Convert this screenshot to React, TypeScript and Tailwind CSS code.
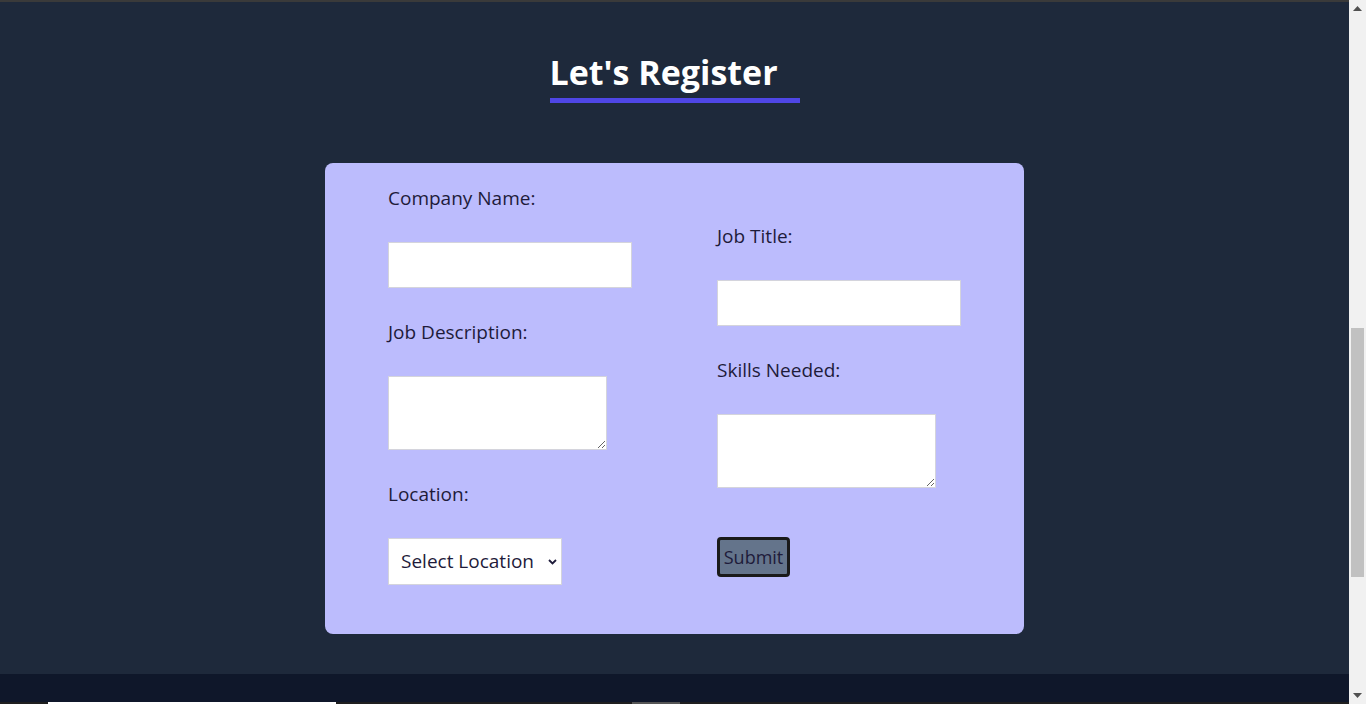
import React, { useEffect, useRef } from 'react';

const Field: React.FC<{ label: string; children: React.ReactNode }> = ({ label, children }) => (
  <div className="flex flex-col gap-[30px]">
    <label className="text-[19px] leading-[28px] text-[#1e1b3a]">{label}</label>
    {children}
  </div>
);

// classic windows-style scrollbar, drawn because the headless page hides the native one
const ScrollbarOverlay: React.FC = () => (
  <div className="fixed right-0 top-0 flex h-screen w-[17px] flex-col bg-[#f1f1f1]">
    <div className="flex h-[17px] items-center justify-center">
      <svg width="9" height="5" viewBox="0 0 9 5">
        <path d="M0 5L4.5 0L9 5z" fill="#505050" />
      </svg>
    </div>
    <div className="relative flex-1">
      <div className="absolute left-[2px] top-[311px] h-[249px] w-[13px] bg-[#c1c1c1]" />
    </div>
    <div className="flex h-[17px] items-center justify-center">
      <svg width="9" height="5" viewBox="0 0 9 5">
        <path d="M0 0L4.5 5L9 0z" fill="#505050" />
      </svg>
    </div>
  </div>
);

export default function App() {
  const scroller = useRef<HTMLDivElement>(null);

  useEffect(() => {
    if (scroller.current) scroller.current.scrollTop = 879;
  }, []);

  return (
    <div
      ref={scroller}
      className="h-screen overflow-y-scroll bg-[#1e293b] pr-[17px]"
      style={{ fontFamily: '"Open Sans", "Noto Sans", sans-serif' }}
    >
      {/* hero above the fold */}
      <section className="h-[881px] bg-[#1e293b] border-b-2 border-[#3a3a3a]" />

      <section className="pt-[50px] pb-[40px]">
        <div className="flex justify-center">
          <h2 className="w-[250px] border-b-[5px] border-[#4f46e5] pb-[6px] text-[34px] leading-[40px] font-bold text-white">
            Let's Register
          </h2>
        </div>

        <form
          className="mx-auto mt-[60px] flex w-[699px] items-start rounded-lg bg-[#bcbcfd] pl-[63px]"
          onSubmit={(e) => e.preventDefault()}
        >
          <div className="flex w-[329px] flex-col gap-[30px] pt-[21px] pb-[49px]">
            <Field label="Company Name:">
              <input type="text" className="h-[46px] w-[244px] border border-[#d4d4dc] bg-white" />
            </Field>
            <Field label="Job Description:">
              <textarea className="h-[74px] w-[219px] border border-[#d4d4dc] bg-white" />
            </Field>
            <Field label="Location:">
              <div className="relative w-[174px]">
                <select className="h-[47px] w-full appearance-none border border-[#d4d4dc] bg-white pl-[12px] text-[19px] text-[#1e1b3a]">
                  <option>Select Location</option>
                  <option>Remote</option>
                  <option>On-site</option>
                </select>
                <svg
                  className="pointer-events-none absolute right-[5px] top-[21px]"
                  width="9"
                  height="6"
                  viewBox="0 0 9 6"
                >
                  <path d="M1 1l3.5 3.5L8 1" stroke="#1e1b3a" strokeWidth="1.8" fill="none" />
                </svg>
              </div>
            </Field>
          </div>

          <div className="flex flex-col gap-[30px] pt-[59px]">
            <Field label="Job Title:">
              <input type="text" className="h-[46px] w-[244px] border border-[#d4d4dc] bg-white" />
            </Field>
            <Field label="Skills Needed:">
              <textarea className="h-[74px] w-[219px] border border-[#d4d4dc] bg-white" />
            </Field>
            <button
              type="submit"
              className="mt-[19px] h-[40px] w-[73px] rounded-[4px] border-[3px] border-[#1a1a1a] bg-[#64748b] text-[18px] text-[#1e1b3a]"
            >
              Submit
            </button>
          </div>
        </form>
      </section>

      <footer className="h-[341px] bg-[#0f172a] pt-[28px]">
        <div className="flex h-[40px] items-start bg-[#1f1f1f] pl-[48px]">
          <input type="email" className="h-[40px] w-[288px] bg-white" />
          <div className="ml-[296px] h-[40px] w-[48px] bg-[#555]" />
        </div>
      </footer>

      <ScrollbarOverlay />
    </div>
  );
}
